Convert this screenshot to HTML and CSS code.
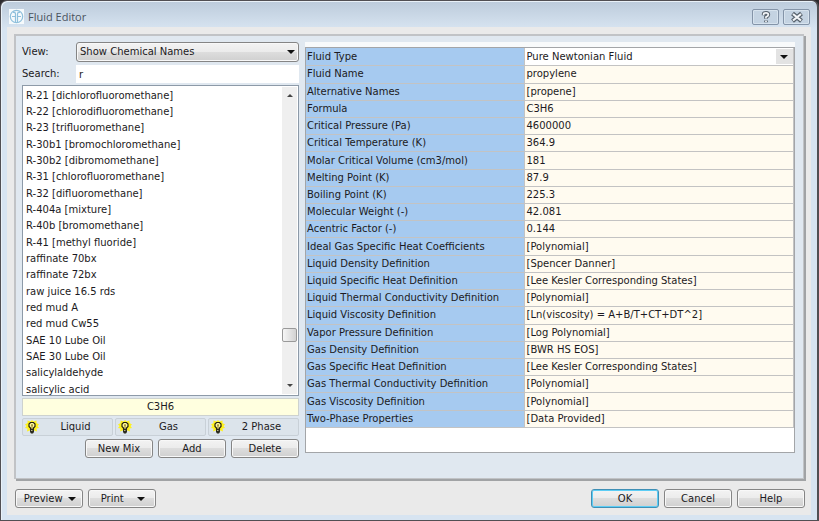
FILE: index.html
```html
<!DOCTYPE html>
<html lang="en">
<head>
<meta charset="utf-8">
<title>Fluid Editor</title>
<link rel="stylesheet" href="styles.css">
</head>
<body>
<div class="window">
  <header class="titlebar">
    <svg class="logo" width="15" height="15" viewBox="0 0 15 15" aria-hidden="true">
      <rect width="15" height="15" fill="#f6fafc"/>
      <g fill="none" stroke="#8fc0dc" stroke-width="1.2">
        <circle cx="7.5" cy="7.5" r="6.2"/>
        <path d="M6.500 13.500V5q0-2-2.500-1.500M8.500 13.500V5q0-2 2.500-1.500M3 7.500h3.500M8.500 7.500h3.500"/>
      </g>
    </svg>
    <h1>Fluid Editor</h1>
    <button class="caption" aria-label="Context help">
      <svg width="14" height="14" viewBox="0 0 12 12"><path d="M4 4.500V3.500Q4 2.500 6 2.500T8 4Q8 5 6 6V7.500M6 9V10.500" fill="none" stroke="#56616c" stroke-width="3.200"/><path d="M4 4.300V3.500Q4 2.500 6 2.500T8 4Q8 5 6 6V7.300M6 9.200V10.300" fill="none" stroke="#f2f5f8" stroke-width="1.500"/></svg>
    </button>
    <button class="caption" aria-label="Close">
      <svg width="14" height="14" viewBox="0 0 14 14"><path d="M2.500 3.500L11.500 11M11.500 3.500L2.500 11" fill="none" stroke="#56616c" stroke-width="4.400"/><path d="M3 4L11 10.500M11 4L3 10.500" fill="none" stroke="#f2f5f8" stroke-width="2.200"/></svg>
    </button>
  </header>

  <main class="client">
    <div class="panel">
      <section class="finder">
        <div class="field">
          <label for="view">View:</label>
          <span class="combo"><select id="view" class="btn"><option>Show Chemical Names</option></select></span>
        </div>
        <div class="field">
          <label for="search">Search:</label>
          <input id="search" type="text" value="r">
        </div>
        <div class="listbox">
          <select size="19" aria-label="Fluids">
            <option>R-21 [dichlorofluoromethane]</option>
            <option>R-22 [chlorodifluoromethane]</option>
            <option>R-23 [trifluoromethane]</option>
            <option>R-30b1 [bromochloromethane]</option>
            <option>R-30b2 [dibromomethane]</option>
            <option>R-31 [chlorofluoromethane]</option>
            <option>R-32 [difluoromethane]</option>
            <option>R-404a [mixture]</option>
            <option>R-40b [bromomethane]</option>
            <option>R-41 [methyl fluoride]</option>
            <option>raffinate 70bx</option>
            <option>raffinate 72bx</option>
            <option>raw juice 16.5 rds</option>
            <option>red mud A</option>
            <option>red mud Cw55</option>
            <option>SAE 10 Lube Oil</option>
            <option>SAE 30 Lube Oil</option>
            <option>salicylaldehyde</option>
            <option>salicylic acid</option>
          </select>
          <div class="scrollbar" aria-hidden="true">
            <i class="up"></i><i class="track"></i><i class="thumb"></i><i class="rest"></i><i class="down"></i>
          </div>
        </div>
        <output class="formula">C3H6</output>
        <div class="phases">
          <button><svg width="14" height="14"><use href="#bulb"/></svg><span>Liquid</span></button>
          <button><svg width="14" height="14"><use href="#bulb"/></svg><span>Gas</span></button>
          <button><svg width="14" height="14"><use href="#bulb"/></svg><span>2 Phase</span></button>
        </div>
        <div class="actions">
          <button class="btn">New Mix</button>
          <button class="btn">Add</button>
          <button class="btn">Delete</button>
        </div>
      </section>

      <section class="properties">
        <div class="strip"></div>
        <div class="sheet">
          <table>
            <tbody>
              <tr><th scope="row">Fluid Type</th><td class="choice"><span class="pick"><select aria-label="Fluid Type"><option>Pure Newtonian Fluid</option></select></span></td></tr>
              <tr><th scope="row">Fluid Name</th><td>propylene</td></tr>
              <tr><th scope="row">Alternative Names</th><td>[propene]</td></tr>
              <tr><th scope="row">Formula</th><td>C3H6</td></tr>
              <tr><th scope="row">Critical Pressure (Pa)</th><td>4600000</td></tr>
              <tr><th scope="row">Critical Temperature (K)</th><td>364.9</td></tr>
              <tr><th scope="row">Molar Critical Volume (cm3/mol)</th><td>181</td></tr>
              <tr><th scope="row">Melting Point (K)</th><td>87.9</td></tr>
              <tr><th scope="row">Boiling Point (K)</th><td>225.3</td></tr>
              <tr><th scope="row">Molecular Weight (-)</th><td>42.081</td></tr>
              <tr><th scope="row">Acentric Factor (-)</th><td>0.144</td></tr>
              <tr><th scope="row">Ideal Gas Specific Heat Coefficients</th><td>[Polynomial]</td></tr>
              <tr><th scope="row">Liquid Density Definition</th><td>[Spencer Danner]</td></tr>
              <tr><th scope="row">Liquid Specific Heat Definition</th><td>[Lee Kesler Corresponding States]</td></tr>
              <tr><th scope="row">Liquid Thermal Conductivity Definition</th><td>[Polynomial]</td></tr>
              <tr><th scope="row">Liquid Viscosity Definition</th><td>[Ln(viscosity) = A+B/T+CT+DT^2]</td></tr>
              <tr><th scope="row">Vapor Pressure Definition</th><td>[Log Polynomial]</td></tr>
              <tr><th scope="row">Gas Density Definition</th><td>[BWR HS EOS]</td></tr>
              <tr><th scope="row">Gas Specific Heat Definition</th><td>[Lee Kesler Corresponding States]</td></tr>
              <tr><th scope="row">Gas Thermal Conductivity Definition</th><td>[Polynomial]</td></tr>
              <tr><th scope="row">Gas Viscosity Definition</th><td>[Polynomial]</td></tr>
              <tr><th scope="row">Two-Phase Properties</th><td>[Data Provided]</td></tr>
            </tbody>
          </table>
        </div>
      </section>
    </div>

    <footer class="footer">
      <button class="btn menu">Preview</button>
      <button class="btn menu">Print</button>
      <span class="spacer"></span>
      <button class="btn default">OK</button>
      <button class="btn">Cancel</button>
      <button class="btn">Help</button>
    </footer>
  </main>
</div>

<svg class="defs" width="0" height="0" aria-hidden="true">
  <symbol id="bulb" viewBox="0 0 14 14">
    <path d="M7 0L8.500 1.500L11.500 .5L11.500 3L14 4.500L12.500 6L14 8L11.500 8.500L12 11.500L9.500 10.500H4.500L2 11.500L2.500 8.500L0 8L1.500 6L0 4.500L2.500 3L2.500 .5L5.500 1.500Z" fill="#fff21c"/>
    <path d="M5.500 9V8L4 6.500V4L5.500 2.500H8.500L10 4V6.500L8.500 8V9Z" fill="#fff9a0" stroke="#25230c" stroke-width="1.200"/>
    <path d="M6 5H8M7 5V8" fill="none" stroke="#8b7c1c"/>
    <path d="M5 9H9V12L8 13.500H6L5 12Z" fill="#2c2c20"/>
    <path d="M6 10.500H7.500" stroke="#b8b48c"/>
  </symbol>
</svg>
</body>
</html>
```
FILE: styles.css
```css
* { box-sizing: border-box; }

html, body { height: 100%; }

body {
  margin: 0;
  background: #2c2b2e;
  color: #1c1a22;
  font: 10px/14px "DejaVu Sans", sans-serif;
}

button, input, select {
  margin: 0;
  color: inherit;
  font: inherit;
}

.defs { position: absolute; }

/* Window frame */
.window {
  display: flex;
  flex-direction: column;
  min-height: 100%;
  padding: 0 5px 5px;
  border: 2px solid #514f53;
  border-width: 1px 2px 2px 1px;
  border-radius: 7px 7px 0 0;
  background: linear-gradient(#bccbdb, #d7e4f1 28px, #d7e4f1);
  box-shadow: inset 1px 1px #e9f1f8;
}

.titlebar {
  display: flex;
  align-items: center;
  gap: 4px;
  height: 26px;
  padding: 5px 2px 0 3px;
}

.titlebar h1 {
  flex: 1;
  margin: 0;
  color: #4a535e;
  font: 11px/16px "Open Sans", sans-serif;
}

.caption {
  display: grid;
  place-items: center;
  width: 27px;
  height: 16px;
  padding: 0;
  border: 1px solid #8494a8;
  border-radius: 2px;
  background: #c4d3e2;
  box-shadow: inset 0 0 0 1px #d7e3ee;
}

.client {
  display: flex;
  flex: 1;
  flex-direction: column;
  margin: 0 1px;
  padding: 7px 6px 7px 7px;
  background: #eaeaea;
}

/* Main panel */
.panel {
  display: flex;
  flex: 1;
  gap: 6px;
  margin-right: 1px;
  padding: 6px 8px 20px 6px;
  border: 2px solid #c1c3c6;
  border-width: 2px 1px 1px 2px;
  background: #e0e8f0;
  box-shadow: 2px 2px #a1a3a5;
}

.finder {
  display: flex;
  flex: 0 0 277px;
  flex-direction: column;
}

.field {
  display: grid;
  grid-template-columns: 54px 1fr;
  align-items: center;
  height: 20px;
  margin-bottom: 1px;
}

.field + .field { margin-top: 1px; }

.field input {
  width: 100%;
  height: 18px;
  padding: 0 3px;
  border: 0;
  background: #fff;
  outline: 0;
}

.btn {
  height: 19px;
  padding: 0;
  border: 1px solid #858585;
  border-radius: 3px;
  background: linear-gradient(#f3f3f3, #ebebeb 50%, #dddddd 50%, #d0d0d0);
  box-shadow: inset 0 0 0 1px #f8f8f8;
  text-align: center;
}

.combo, .pick {
  position: relative;
  display: block;
}

.combo .btn {
  display: block;
  width: 100%;
  height: 20px;
  padding: 0 3px;
  appearance: none;
  text-align: left;
}

.combo::after {
  position: absolute;
  top: 8px;
  right: 4px;
  border: 4px solid transparent;
  border-top-color: #111;
  border-bottom: 0;
  content: "";
}

.listbox {
  display: flex;
  height: 311px;
  border: 1px solid #8d9aa8;
  background: #fff;
}

.listbox select {
  flex: 1;
  height: 309px;
  padding: 3px 0 0;
  overflow: hidden;
  border: 0;
  background: #fff;
  outline: 0;
}

.listbox option {
  min-height: 16px;
  padding: 1px 3px;
  line-height: 14px;
}

.listbox option:nth-child(3n) { min-height: 17px; }

.scrollbar {
  display: grid;
  grid-template-rows: 17px 1fr 14px 35px 17px;
  width: 15px;
  margin: 1px;
  background: #efefef;
}

.up, .down {
  place-self: center;
  border: 3px solid transparent;
}

.up { border-top: 0; border-bottom-color: #444; }
.down { border-bottom: 0; border-top-color: #444; }

.thumb {
  border: 1px solid #999;
  border-radius: 2px;
  background: linear-gradient(90deg, #f6f6f6, #d2d2d2);
}

.formula {
  height: 18px;
  margin: 2px 0;
  border: 1px solid #cdd2cf;
  background: #ffffdf;
  line-height: 16px;
  text-align: center;
}

.phases {
  display: grid;
  grid-template-columns: repeat(3, 1fr);
  gap: 2px;
}

.phases button {
  display: grid;
  grid-template-columns: 16px 1fr;
  align-items: center;
  height: 18px;
  padding: 0 2px;
  border: 1px solid #c8d0d7;
  border-radius: 2px;
  background: #dce4eb;
}

.actions {
  display: flex;
  justify-content: flex-end;
  gap: 5px;
  margin-top: 3px;
}

.actions .btn, .footer .btn { width: 68px; }

/* Property sheet */
.properties {
  display: flex;
  flex: 1;
  flex-direction: column;
  margin-bottom: 5px;
}

.strip {
  height: 5px;
  background: #f8fafb;
}

.sheet {
  flex: 1;
  border: 1px solid #a3a5a8;
  background: #fff;
}

table {
  width: 100%;
  height: 380px;
  border-collapse: collapse;
  table-layout: fixed;
}

th, td {
  padding: 0 1px;
  border: 1px solid #c3c3c3;
  border-width: 0 1px 1px 0;
  line-height: 14px;
  text-align: left;
  white-space: nowrap;
}

th {
  width: 218px;
  background: #a6caf0;
  font-weight: normal;
}

td {
  padding-left: 2px;
  background: #fffbf0;
}

.choice {
  padding: 0;
  background: #fff;
}

.pick select {
  display: block;
  width: 100%;
  height: 15px;
  padding: 0 2px;
  appearance: none;
  border: 0;
  background: linear-gradient(#e3e3e3, #e3e3e3) right / 17px 100% no-repeat #fff;
}

.pick::after {
  position: absolute;
  top: 6px;
  right: 5px;
  border: 4px solid transparent;
  border-top-color: #111;
  border-bottom: 0;
  content: "";
}

/* Footer buttons */
.footer {
  display: flex;
  gap: 5px;
  padding: 10px 0 0 1px;
}

.spacer { flex: 1; }

.menu {
  display: flex;
  align-items: center;
  justify-content: space-around;
  padding: 0 3px 0 5px;
}

.menu::after {
  border: 4px solid transparent;
  border-top-color: #111;
  border-bottom: 0;
  content: "";
}

.default {
  border-color: #3f8fb5;
  box-shadow: inset 0 0 0 1px #5ccdf5;
}
```
